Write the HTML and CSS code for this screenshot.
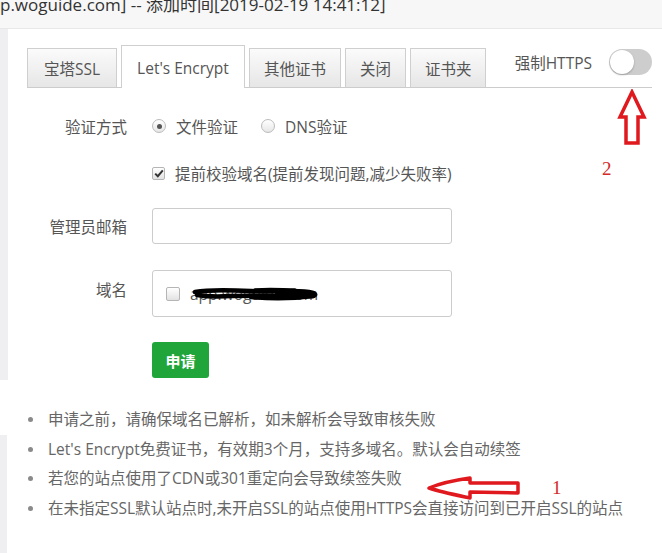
FILE: index.html
```html
<!DOCTYPE html>
<html lang="zh-CN">
<head>
<meta charset="utf-8">
<title>SSL</title>
<link rel="stylesheet" href="styles.css">
</head>
<body>
<div class="header"><span class="title">p.woguide.com] -- 添加时间[2019-02-19 14:41:12]</span></div>
<div class="panel">
  <div class="tabbar">
    <div class="tab first">宝塔SSL</div>
    <div class="tab active">Let's Encrypt</div>
    <div class="tab">其他证书</div>
    <div class="tab">关闭</div>
    <div class="tab">证书夹</div>
    <div class="force">
      <span class="force-label">强制HTTPS</span>
      <span class="switch"><span class="knob"></span></span>
    </div>
    <svg class="arrow-up" width="32" height="58" viewBox="0 0 32 58">
      <path d="M16 3 L28 28 L22 28 L22 54 L10 54 L10 28 L4 28 Z" fill="#fff" stroke="#e0191f" stroke-width="3.5" stroke-linejoin="miter"/>
    </svg>
    <span class="mark mark2">2</span>
  </div>
  <div class="form">
    <div class="row row-radio">
      <div class="label">验证方式</div>
      <div class="ctrl">
        <label class="opt"><span class="radio checked"></span>文件验证</label>
        <label class="opt"><span class="radio"></span>DNS验证</label>
      </div>
    </div>
    <div class="row row-check">
      <div class="label"></div>
      <div class="ctrl">
        <label class="opt"><span class="check checked"><svg width="10" height="9" viewBox="0 0 10 9"><path d="M1.2 4.6 L3.8 7.2 L8.8 1.4" fill="none" stroke="#333" stroke-width="2"/></svg></span>提前校验域名(提前发现问题,减少失败率)</label>
      </div>
    </div>
    <div class="row row-email">
      <div class="label">管理员邮箱</div>
      <div class="ctrl"><div class="input"></div></div>
    </div>
    <div class="row row-domain">
      <div class="label">域名</div>
      <div class="ctrl">
        <div class="input domain">
          <span class="check"></span>
          <span class="domain-text">app.woguide.com</span>
          <svg class="scribble" width="130" height="16" viewBox="0 0 130 16">
            <path d="M4 6 C20 3 40 4 60 5 C80 6 100 4 118 6 C124 7 126 9 122 10 C100 11 70 9 40 10 C25 11 12 10 6 9" fill="none" stroke="#000" stroke-width="4.5" stroke-linecap="round"/>
            <path d="M64 4 C80 3 92 4 104 4" fill="none" stroke="#000" stroke-width="3.5" stroke-linecap="round"/>
            <path d="M60 11 C80 13 100 13 122 10" fill="none" stroke="#000" stroke-width="4.5" stroke-linecap="round"/>
            <path d="M86 8 C96 7 108 7 118 8" fill="none" stroke="#000" stroke-width="4" stroke-linecap="round"/>
          </svg>
        </div>
      </div>
    </div>
    <div class="row row-btn">
      <div class="label"></div>
      <div class="ctrl"><button class="btn">申请</button></div>
    </div>
  </div>
</div>
<div class="notes">
  <ul class="list first">
    <li>申请之前，请确保域名已解析，如未解析会导致审核失败</li>
  </ul>
  <ul class="list rest">
    <li>Let's Encrypt免费证书，有效期3个月，支持多域名。默认会自动续签</li>
    <li>若您的站点使用了CDN或301重定向会导致续签失败</li>
    <li>在未指定SSL默认站点时,未开启SSL的站点使用HTTPS会直接访问到已开启SSL的站点</li>
  </ul>
  <svg class="arrow-left" width="96" height="26" viewBox="0 0 96 26">
    <path d="M3 13 C15 8 30 5 44 3 L44 8 L92 8 L92 18 L44 17 L44 23 C30 20 15 17 3 13 Z" fill="#fff" stroke="#e0191f" stroke-width="3.5" stroke-linejoin="round"/>
  </svg>
  <span class="mark mark1">1</span>
</div>
</body>
</html>
```
FILE: styles.css
```css
html, body {
  margin: 0;
  padding: 0;
  background: #fff;
}
body {
  font-family: "Open Sans", "Noto Sans CJK SC", sans-serif;
  color: #555;
  font-size: 15.5px;
  width: 662px;
  height: 553px;
  overflow: hidden;
}
.header {
  height: 28px;
  background: #f7f7f7;
  border-bottom: 1px solid #e8e8e8;
  overflow: hidden;
}
.title {
  display: block;
  margin-top: -8px;
  font-size: 17px;
  line-height: 26px;
  color: #333;
  white-space: nowrap;
}
.panel {
  border-left: 8px solid #efeff1;
  padding: 16px 10px 2px 19px;
}
.tabbar {
  position: relative;
  display: flex;
  align-items: flex-end;
  gap: 4px;
  border-bottom: 1px solid #ccc;
  height: 42px;
}
.tab {
  height: 39px;
  line-height: 40px;
  padding: 0 14px;
  border: 1px solid #cfcfcf;
  border-bottom: none;
  background: linear-gradient(#fbfbfb, #e6e6e6);
  color: #555;
  box-sizing: border-box;
}
.tab.first {
  padding: 0 16px;
}
.tab.active {
  height: 43px;
  line-height: 44px;
  margin-bottom: -1px;
  background: #fff;
  padding: 0 15px;
}
.force {
  margin-left: auto;
  align-self: flex-start;
  display: flex;
  align-items: center;
  gap: 17px;
  padding-top: 4px;
}
.force-label {
  color: #555;
}
.switch {
  position: relative;
  display: block;
  width: 43px;
  height: 26px;
  border-radius: 13px;
  background: #cdcdcd;
}
.knob {
  position: absolute;
  left: 1px;
  top: 1px;
  width: 24px;
  height: 24px;
  border-radius: 50%;
  background: #fff;
  box-shadow: 0 1px 2px rgba(0,0,0,0.25);
}
.arrow-up {
  position: absolute;
  left: 589px;
  top: 44px;
}
.mark {
  position: absolute;
  font-family: "Liberation Serif", serif;
  font-size: 19px;
  color: #d42a2a;
}
.mark2 {
  left: 575px;
  top: 113px;
}
.form {
  padding-top: 25px;
}
.row {
  display: flex;
  gap: 25px;
}
.label {
  width: 100px;
  flex: none;
  text-align: right;
  color: #555;
}
.ctrl {
  display: flex;
  align-items: center;
}
.row-radio {
  height: 26px;
  align-items: center;
}
.row-check {
  margin-top: 21px;
  height: 26px;
  align-items: center;
}
.opt {
  display: flex;
  align-items: center;
  gap: 10px;
  margin-right: 23px;
  color: #555;
}
.radio {
  width: 12px;
  height: 12px;
  border: 1px solid #bbb;
  border-radius: 50%;
  background: linear-gradient(#fff, #e6e6e6);
  position: relative;
}
.radio.checked::after {
  content: "";
  position: absolute;
  left: 3.5px;
  top: 3.5px;
  width: 5px;
  height: 5px;
  border-radius: 50%;
  background: #555;
}
.check {
  width: 11px;
  height: 11px;
  border: 1px solid #b5b5b5;
  border-radius: 2px;
  background: linear-gradient(#fff, #e2e2e2);
  display: flex;
  align-items: center;
  justify-content: center;
}
.row-email {
  margin-top: 22px;
  align-items: center;
}
.input {
  width: 300px;
  height: 36px;
  border: 1px solid #ccc;
  border-radius: 3px;
  box-sizing: border-box;
}
.row-domain {
  margin-top: 26px;
}
.row-domain .label {
  padding-top: 8px;
}
.input.domain {
  height: 47px;
  position: relative;
  display: flex;
  align-items: center;
  padding-left: 13px;
  gap: 10px;
}
.input.domain .check {
  width: 12px;
  height: 12px;
}
.domain-text {
  color: #555;
}
.scribble {
  position: absolute;
  left: 38px;
  top: 15px;
}
.row-btn {
  margin-top: 25px;
}
.btn {
  width: 57px;
  height: 36px;
  border: none;
  border-radius: 3px;
  background: #20a53a;
  color: #fff;
  font-family: "Open Sans", "Noto Sans CJK SC", sans-serif;
  font-size: 15px;
  font-weight: bold;
  padding: 0;
}
.notes {
  position: relative;
  padding-top: 25px;
}
.list {
  margin: 0;
  list-style: none;
  padding: 0;
}
.list li {
  position: relative;
  line-height: 29.6px;
  color: #666;
  white-space: nowrap;
}
.list li::before {
  content: "";
  position: absolute;
  top: 12px;
  left: -20px;
  width: 5px;
  height: 5px;
  border-radius: 50%;
  background: #8a8a8a;
}
.list.first {
  padding-left: 48px;
}
.list.rest {
  border-left: 7px solid #efeff1;
  padding-left: 41px;
  padding-bottom: 40px;
}
.arrow-left {
  position: absolute;
  left: 426px;
  top: 95px;
}
.mark1 {
  left: 552px;
  top: 97px;
}
```
